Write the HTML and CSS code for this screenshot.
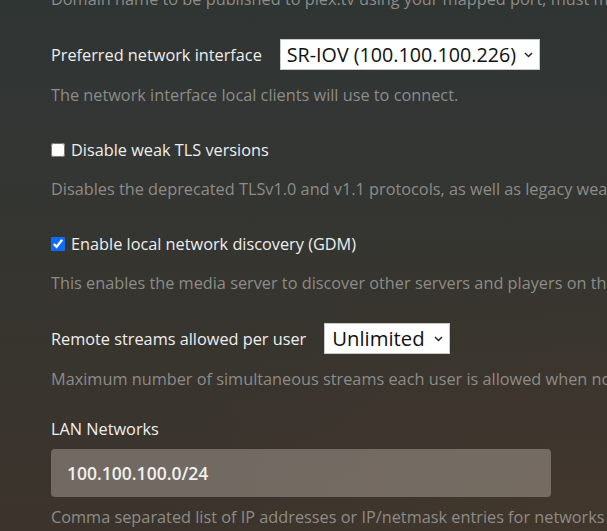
FILE: index.html
```html
<!DOCTYPE html>
<html lang="en">
<head>
<meta charset="utf-8">
<title>Network Settings</title>
<link rel="stylesheet" href="styles.css">
</head>
<body>
<div class="page">
  <div class="settings">
    <div class="group">
      <p class="help help-first">Domain name to be published to plex.tv using your mapped port; must match a name from the custom certificate file.</p>
    </div>

    <div class="group">
      <div class="row">
        <label class="label" for="iface">Preferred network interface</label>
        <div class="select-wrap">
          <select id="iface" class="select">
            <option>SR-IOV (100.100.100.226)</option>
          </select>
          <svg class="chevron" viewBox="0 0 9 6" width="9" height="6"><path d="M1 1 L4.5 4.6 L8 1" fill="none" stroke="#222" stroke-width="1.4"/></svg>
        </div>
      </div>
      <p class="help">The network interface local clients will use to connect.</p>
    </div>

    <div class="group">
      <div class="row row-check">
        <input type="checkbox" id="tls" class="check">
        <label class="label" for="tls">Disable weak TLS versions</label>
      </div>
      <p class="help">Disables the deprecated TLSv1.0 and v1.1 protocols, as well as legacy weak ciphers. May not work with some older clients.</p>
    </div>

    <div class="group">
      <div class="row row-check">
        <input type="checkbox" id="gdm" class="check" checked>
        <label class="label" for="gdm">Enable local network discovery (GDM)</label>
      </div>
      <p class="help">This enables the media server to discover other servers and players on the local network.</p>
    </div>

    <div class="group">
      <div class="row">
        <label class="label" for="streams">Remote streams allowed per user</label>
        <div class="select-wrap">
          <select id="streams" class="select select-wide">
            <option>Unlimited</option>
          </select>
          <svg class="chevron" viewBox="0 0 9 6" width="9" height="6"><path d="M1 1 L4.5 4.6 L8 1" fill="none" stroke="#222" stroke-width="1.4"/></svg>
        </div>
      </div>
      <p class="help">Maximum number of simultaneous streams each user is allowed when not on the local network.</p>
    </div>

    <div class="group">
      <label class="label block" for="lan">LAN Networks</label>
      <input id="lan" class="text-input" type="text" value="100.100.100.0/24">
      <p class="help help-tight">Comma separated list of IP addresses or IP/netmask entries for networks that will be considered to be on the local network.</p>
    </div>
  </div>
</div>
</body>
</html>
```

FILE: styles.css
```css
html, body {
  margin: 0;
  padding: 0;
  height: 100%;
  overflow: hidden;
}

body {
  font-family: "Open Sans", "Noto Sans", sans-serif;
  background:
    radial-gradient(ellipse 70% 45% at 95% 95%, rgba(72, 58, 46, 0.45), rgba(72, 58, 46, 0) 100%),
    linear-gradient(to bottom, #2f3533 0%, #333634 25%, #36352f 55%, #3a342e 80%, #3c342c 100%);
  color: #eeeeee;
}

.page {
  padding-left: 51px;
  width: 700px;
}

.settings {
  padding-top: 1px;
  margin-top: -12px;
}

.group {
  margin-bottom: 30px;
}

.row {
  display: flex;
  align-items: center;
  gap: 18px;
  height: 31px;
}

.row-check {
  height: 29px;
  gap: 0;
}

.label {
  font-size: 16.3px;
  line-height: 20px;
  color: #eeeeee;
  white-space: nowrap;
}

.label.block {
  display: block;
}

.help {
  margin: 15px 0 0;
  font-size: 16.3px;
  line-height: 20px;
  color: #8d8c88;
  white-space: nowrap;
}

.help-first {
  margin-top: 0;
}

.help-tight {
  margin-top: 10px;
}

.select-wrap {
  position: relative;
  display: flex;
}

.select {
  appearance: none;
  -webkit-appearance: none;
  height: 31px;
  margin: 0;
  padding: 0 22px 0 6px;
  border: 1px solid #c9c9c9;
  border-radius: 0;
  background: #ffffff;
  color: #111111;
  font-family: "Open Sans", "Noto Sans", sans-serif;
  font-size: 19.7px;
  line-height: 29px;
}

.select-wide {
  padding-left: 7px;
  padding-right: 24px;
  font-size: 20.3px;
}

.chevron {
  position: absolute;
  right: 7px;
  top: 13px;
  pointer-events: none;
}

.check {
  width: 14px;
  height: 14px;
  margin: 0 6px 0 0;
  accent-color: #0a6dff;
}

.text-input {
  display: block;
  box-sizing: border-box;
  width: 500px;
  height: 48px;
  margin-top: 10px;
  padding: 0 16px;
  border: none;
  border-radius: 4px;
  background: rgba(190, 182, 172, 0.42);
  color: #f0f0f0;
  font-family: "Open Sans", "Noto Sans", sans-serif;
  font-size: 17.5px;
  font-weight: 600;
  outline: none;
}
```
